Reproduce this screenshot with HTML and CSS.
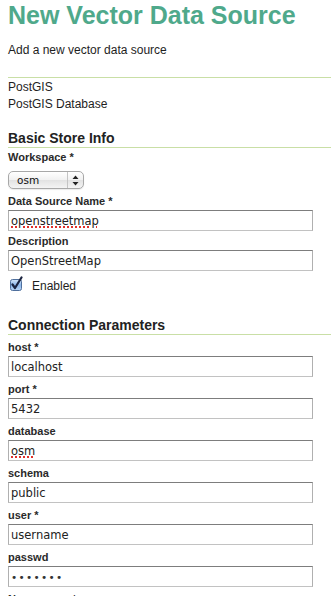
FILE: index.html
```html
<!DOCTYPE html>
<html>
<head>
<meta charset="utf-8">
<link rel="stylesheet" href="styles.css">
</head>
<body>
<h1 class="title">New Vector Data Source</h1>
<p class="subtitle">Add a new vector data source</p>
<div class="store-type">
  <div class="line">PostGIS</div>
  <div class="line">PostGIS Database</div>
</div>

<section class="group group-basic">
  <h2 class="group-title">Basic Store Info</h2>
  <div class="field field-select">
    <label class="label">Workspace *</label>
    <div class="select">
      <span class="select-value">osm</span>
      <span class="select-arrows">
        <svg width="7" height="11" viewBox="0 0 7 11"><path d="M3.5 0.5 L6.5 4 L0.5 4 Z M3.5 10.5 L6.5 7 L0.5 7 Z" fill="#222"/></svg>
      </span>
    </div>
  </div>
  <div class="field">
    <label class="label">Data Source Name *</label>
    <input class="text-input misspelled" type="text" value="openstreetmap" spellcheck="false">
  </div>
  <div class="field field-desc">
    <label class="label">Description</label>
    <input class="text-input" type="text" value="OpenStreetMap" spellcheck="false">
  </div>
  <div class="check-row">
    <span class="checkbox">
      <svg width="15" height="16" viewBox="0 0 15 16">
        <defs>
          <linearGradient id="cb" x1="0" y1="0" x2="0" y2="1">
            <stop offset="0" stop-color="#d6e6f8"/>
            <stop offset="0.5" stop-color="#8db7ea"/>
            <stop offset="1" stop-color="#b9d5f5"/>
          </linearGradient>
        </defs>
        <rect x="1.5" y="3.5" width="11" height="11" rx="2" fill="url(#cb)" stroke="#4f6f9c"/>
        <path d="M3.5 8.5 L6 12 L12.5 1.5" fill="none" stroke="#1b2440" stroke-width="2.2" stroke-linecap="round" stroke-linejoin="round"/>
      </svg>
    </span>
    <span class="check-label">Enabled</span>
  </div>
</section>

<section class="group group-conn">
  <h2 class="group-title">Connection Parameters</h2>
  <div class="field">
    <label class="label">host *</label>
    <input class="text-input" type="text" value="localhost" spellcheck="false">
  </div>
  <div class="field">
    <label class="label">port *</label>
    <input class="text-input" type="text" value="5432" spellcheck="false">
  </div>
  <div class="field">
    <label class="label">database</label>
    <input class="text-input misspelled" type="text" value="osm" spellcheck="false">
  </div>
  <div class="field">
    <label class="label">schema</label>
    <input class="text-input" type="text" value="public" spellcheck="false">
  </div>
  <div class="field">
    <label class="label">user *</label>
    <input class="text-input" type="text" value="username" spellcheck="false">
  </div>
  <div class="field">
    <label class="label">passwd</label>
    <input class="text-input" type="password" value="1234567">
  </div>
  <div class="field">
    <label class="label">Namespace *</label>
    <input class="text-input" type="text" value="" spellcheck="false">
  </div>
</section>
</body>
</html>
```

FILE: styles.css
```css
html, body {
  margin: 0;
  background: #ffffff;
}
body {
  padding: 1px 0 0 8px;
  font-family: "Liberation Sans", Arial, sans-serif;
  color: #1e1e1e;
  overflow: hidden;
}
.title {
  margin: 0;
  font-size: 25px;
  line-height: 29px;
  font-weight: bold;
  color: #4fa98b;
  white-space: nowrap;
}
.subtitle {
  margin: 12px 0 0;
  font-size: 12px;
  line-height: 16px;
}
.store-type {
  margin-top: 19px;
  border-top: 1px solid #c9dfa6;
  padding-top: 1px;
  font-size: 12px;
}
.store-type .line {
  line-height: 17px;
}
.group-title {
  margin: 0;
  font-size: 14px;
  line-height: 18px;
  font-weight: bold;
  color: #222;
  border-bottom: 1px solid #c9dfa6;
}
.group-basic {
  margin-top: 16px;
}
.group-conn {
  margin-top: 24px;
}
.field {
  display: flex;
  flex-direction: column;
  align-items: flex-start;
  margin-top: 5px;
}
.group-basic .field {
  margin-top: 2px;
}
.group-basic .field-select {
  margin-bottom: 5px;
}
.group-basic .field-desc {
  margin-top: 3px;
}
.label {
  font-size: 11px;
  line-height: 14px;
  font-weight: bold;
  color: #2a2a2a;
}
.text-input {
  box-sizing: border-box;
  margin: 2px 0 0;
  width: 305px;
  height: 21px;
  padding: 0 2px;
  border: 1px solid #c2c2c2;
  border-top-color: #7d7d7d;
  border-left-color: #b0b0b0;
  border-right-color: #b0b0b0;
  border-radius: 0;
  background: #fff;
  font-family: "DejaVu Sans", sans-serif;
  font-size: 11.5px;
  color: #222;
  outline: none;
}
.text-input[type="password"] {
  font-size: 10.5px;
  letter-spacing: 1.3px;
  color: #333;
}
.misspelled {
  text-decoration: underline dotted #e0302a;
  text-decoration-thickness: 2px;
  text-underline-offset: 2px;
}
.select {
  box-sizing: border-box;
  margin-top: 7px;
  width: 76px;
  height: 18px;
  display: flex;
  align-items: stretch;
  border: 1px solid #a8a8a8;
  border-radius: 5px;
  background: linear-gradient(#ffffff, #f1f1f1 50%, #e2e2e2 51%, #f4f4f4);
  box-shadow: 0 1px 1px rgba(0,0,0,0.08);
}
.select-value {
  flex: 1;
  padding-left: 8px;
  font-family: "DejaVu Sans", sans-serif;
  font-size: 10.5px;
  line-height: 16px;
  color: #111;
}
.select-arrows {
  width: 15px;
  border-left: 1px solid #c4c4c4;
  display: flex;
  align-items: center;
  justify-content: center;
}
.select-arrows svg {
  display: block;
}
.check-row {
  display: flex;
  align-items: center;
  margin-top: 4px;
  height: 17px;
  padding-left: 1px;
}
.checkbox {
  display: block;
  width: 15px;
  height: 16px;
}
.checkbox svg {
  display: block;
}
.check-label {
  margin-left: 8px;
  margin-top: 4px;
  font-size: 12px;
  line-height: 14px;
}
```
